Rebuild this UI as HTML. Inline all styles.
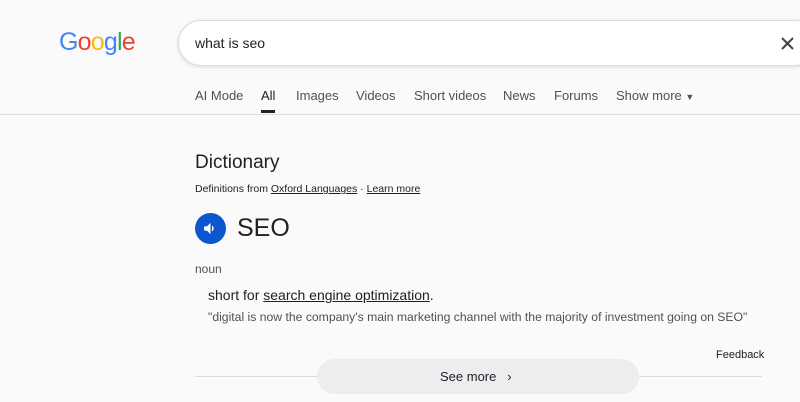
<!DOCTYPE html>
<html><head><style>
*{margin:0;padding:0;box-sizing:border-box}
body{width:800px;height:402px;background:#fafafa;font-family:"Liberation Sans",Arial,sans-serif;position:relative;overflow:hidden;color:#202124}
.a{position:absolute;white-space:nowrap}
.logo{left:59px;top:28px;font-size:25px;letter-spacing:-0.8px}
.search{left:178px;top:20px;width:640px;height:46px;border:1px solid #dadce0;border-radius:24px;background:#fff;box-shadow:0 1px 4px rgba(0,0,0,.12)}
.tabs span{position:absolute;top:88px;font-size:13px;color:#4d5156}
.line{left:0;top:114px;width:800px;height:1px;background:#dadce0}
u{text-decoration:underline}
</style></head><body>
<div class="a logo"><span style="color:#4285f4">G</span><span style="color:#ea4335">o</span><span style="color:#fbbc05">o</span><span style="color:#4285f4">g</span><span style="color:#34a853">l</span><span style="color:#ea4335">e</span></div>
<div class="a search"></div>
<div class="a" style="left:195px;top:35px;font-size:14px;color:#202124">what is seo</div>
<svg class="a" style="left:781px;top:37px" width="13" height="13"><path d="M1 1L12 12M12 1L1 12" stroke="#444" stroke-width="2"/></svg>
<div class="tabs">
<span style="left:195px">AI Mode</span>
<span style="left:261px;color:#202124">All</span>
<span style="left:296px">Images</span>
<span style="left:356px">Videos</span>
<span style="left:414px">Short videos</span>
<span style="left:503px">News</span>
<span style="left:554px">Forums</span>
<span style="left:616px">Show more <span style="position:static;font-size:9px">▼</span></span>
</div>
<div class="a" style="left:261px;top:110px;width:14px;height:3px;background:#202124"></div>
<div class="a line"></div>
<div class="a" style="left:195px;top:152px;font-size:19px">Dictionary</div>
<div class="a" style="left:195px;top:183px;font-size:10.5px">Definitions from <u>Oxford Languages</u> · <u>Learn more</u></div>
<div class="a" style="left:195px;top:213px;width:31px;height:31px;border-radius:50%;background:#0b57d0"></div>
<svg class="a" style="left:202px;top:220px" width="17" height="17" viewBox="0 0 24 24"><path d="M3 9v6h4l5 5V4L7 9H3zm13.5 3A4.5 4.5 0 0 0 14 8v8a4.5 4.5 0 0 0 2.5-4z" fill="#fff"/></svg>
<div class="a" style="left:237px;top:214px;font-size:25px">SEO</div>
<div class="a" style="left:195px;top:262px;font-size:12px;color:#4d5156">noun</div>
<div class="a" style="left:208px;top:287px;font-size:14px">short for <u>search engine optimization</u>.</div>
<div class="a" style="left:208px;top:310px;font-size:12.2px;color:#4d5156">"digital is now the company's main marketing channel with the majority of investment going on SEO"</div>
<div class="a" style="left:716px;top:349px;font-size:11px;color:#202124">Feedback</div>
<div class="a" style="left:195px;top:376px;width:567px;height:1px;background:#dadce0"></div>
<div class="a" style="left:317px;top:359px;width:322px;height:35px;border-radius:18px;background:#ecedef"></div>
<div class="a" style="left:440px;top:369px;font-size:13px">See more &nbsp;&nbsp;›</div>
</body></html>
